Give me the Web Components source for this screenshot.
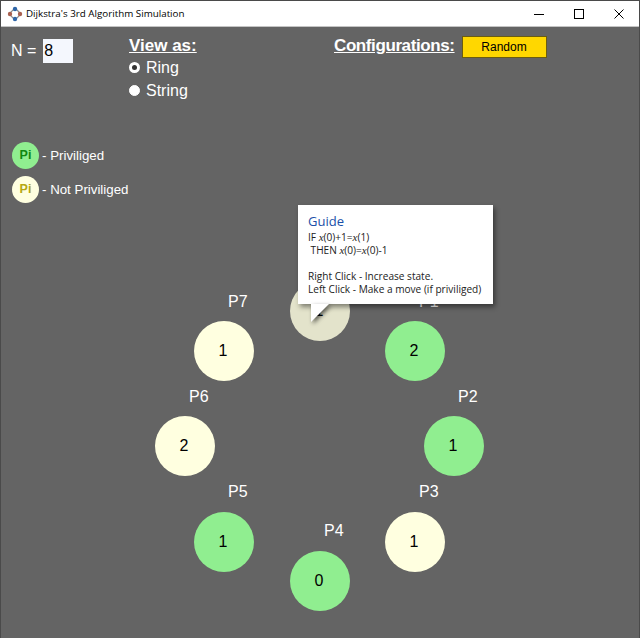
<!DOCTYPE html>
<html>
<head>
<meta charset="utf-8">
<title>Dijkstra's 3rd Algorithm Simulation</title>
<style>
    html, body { margin: 0; padding: 0; height: 100%; background: #646464; }
    body { font-family: "Liberation Sans", Arial, sans-serif; overflow: hidden; }
</style>
</head>
<body>
<app-window>
    <title-bar slot="bar">Dijkstra's 3rd Algorithm Simulation</title-bar>
    <control-panel slot="controls"></control-panel>
    <state-legend slot="legend"></state-legend>
    <ring-canvas slot="canvas"></ring-canvas>
</app-window>

<script>
class AppWindow extends HTMLElement {
    constructor() {
        super();
        this.attachShadow({ mode: "open" }).innerHTML = `
        <style>
            :host {
                display: flex;
                flex-direction: column;
                position: relative;
                width: 640px;
                height: 638px;
                box-sizing: border-box;
                border: 1px solid #4a4a4a;
                border-bottom: 0;
                background: #646464;
                overflow: hidden;
            }
            .main { position: relative; flex: 1; }
        </style>
        <slot name="bar"></slot>
        <div class="main">
            <slot name="controls"></slot>
            <slot name="legend"></slot>
            <slot name="canvas"></slot>
        </div>`;
    }
}

class TitleBar extends HTMLElement {
    constructor() {
        super();
        this.attachShadow({ mode: "open" }).innerHTML = `
        <style>
            :host {
                display: flex;
                align-items: center;
                height: 25px;
                flex: none;
                background: #fff;
                border-bottom: 1px solid #c4c4c4;
                color: #000;
                font: 9.8px "Open Sans", "Noto Sans", sans-serif;
            }
            .logo { width: 16px; height: 16px; margin: 0 3px 0 6px; flex: none; }
            .name { flex: 1; white-space: nowrap; }
            .btn { width: 40px; height: 25px; display: flex; align-items: center; justify-content: center; }
            svg { display: block; }
        </style>
        <svg class="logo" viewBox="0 0 16 16">
            <path d="M8 2 14 8 8 14 2 8Z" fill="none" stroke="#8a8a8a" stroke-width="1.2"/>
            <circle cx="8" cy="3" r="2.2" fill="#2f66a8"/>
            <circle cx="8" cy="13" r="2.2" fill="#2f66a8"/>
            <circle cx="3" cy="8" r="2.2" fill="#a8604f"/>
            <circle cx="13" cy="8" r="2.2" fill="#a8604f"/>
        </svg>
        <span class="name"><slot></slot></span>
        <span class="btn"><svg width="10" height="10" viewBox="0 0 10 10"><path d="M0 5.5H10" stroke="#000"/></svg></span>
        <span class="btn"><svg width="10" height="10" viewBox="0 0 10 10"><rect x=".5" y=".5" width="9" height="9" fill="none" stroke="#000"/></svg></span>
        <span class="btn"><svg width="10" height="10" viewBox="0 0 10 10"><path d="M.5 .5 9.5 9.5M9.5 .5 .5 9.5" stroke="#000" stroke-width="1"/></svg></span>`;
    }
}

class RadioOption extends HTMLElement {
    constructor() {
        super();
        const checked = this.hasAttribute("checked");
        this.attachShadow({ mode: "open" }).innerHTML = `
        <style>
            :host {
                display: flex;
                align-items: center;
                height: 22.5px;
                color: #fff;
                font: 16px "Liberation Sans", Arial, sans-serif;
            }
            .dot {
                width: 11px;
                height: 11px;
                box-sizing: border-box;
                margin: -1px 6px 0 0;
                border-radius: 50%;
                background: #fff;
                border: ${checked ? "3px solid #fff" : "1px solid #fff"};
            }
            .dot::after {
                content: "";
                display: ${checked ? "block" : "none"};
                width: 5px;
                height: 5px;
                border-radius: 50%;
                background: #333;
            }
        </style>
        <span class="dot"></span><slot></slot>`;
    }
}

class ControlPanel extends HTMLElement {
    constructor() {
        super();
        this.attachShadow({ mode: "open" }).innerHTML = `
        <style>
            :host {
                display: flex;
                align-items: flex-start;
                padding: 9px 0 0 10px;
                height: 71px;
                box-sizing: content-box;
                color: #fff;
                font: 16px "Liberation Sans", Arial, sans-serif;
            }
            .n { display: flex; align-items: center; width: 118px; height: 24px; margin-top: 3px; }
            .n input {
                width: 30px;
                height: 24px;
                box-sizing: border-box;
                margin-left: 7px;
                padding: 0 0 0 1px;
                border: 0;
                background: #f4f7fd;
                color: #000;
                font: 16px "Liberation Sans", Arial, sans-serif;
            }
            .view { width: 205px; }
            .options { margin-top: 1px; }
            h2 {
                margin: 0;
                font-size: 17px;
                line-height: 20px;
                font-weight: bold;
                text-decoration: underline;
            }
            .conf { display: flex; align-items: flex-start; gap: 7px; }
            .conf h2 { letter-spacing: -.4px; }
            button {
                width: 85px;
                height: 22px;
                padding: 0;
                background: #ffd700;
                border: 1px solid #6b5d10;
                color: #000;
                font: 12px "Liberation Sans", Arial, sans-serif;
            }
        </style>
        <div class="n">N = <input value="8"></div>
        <div class="view">
            <h2>View as:</h2>
            <div class="options">
                <radio-option checked>Ring</radio-option>
                <radio-option>String</radio-option>
            </div>
        </div>
        <div class="conf">
            <h2>Configurations:</h2>
            <button>Random</button>
        </div>`;
    }
}

class LegendRow extends HTMLElement {
    constructor() {
        super();
        const on = this.hasAttribute("on");
        this.attachShadow({ mode: "open" }).innerHTML = `
        <style>
            :host {
                display: flex;
                align-items: center;
                gap: 3px;
                height: 28px;
                color: #fff;
                font: 13.3px "Liberation Sans", Arial, sans-serif;
            }
            .pi {
                width: 27px;
                height: 27px;
                border-radius: 50%;
                display: flex;
                align-items: center;
                justify-content: center;
                background: ${on ? "#90ee90" : "#ffffe0"};
                color: ${on ? "#118811" : "#b5a812"};
                font-size: 12.5px;
                font-weight: bold;
            }
        </style>
        <span class="pi">Pi</span><span>- <slot></slot></span>`;
    }
}

class StateLegend extends HTMLElement {
    constructor() {
        super();
        this.attachShadow({ mode: "open" }).innerHTML = `
        <style>
            :host {
                display: flex;
                flex-direction: column;
                gap: 6px;
                margin-top: 34px;
                padding-left: 11px;
                width: 200px;
            }
        </style>
        <legend-row on>Priviliged</legend-row>
        <legend-row>Not Priviliged</legend-row>`;
    }
}

class RingNode extends HTMLElement {
    constructor() {
        super();
        const on = this.hasAttribute("on");
        const cx = +this.getAttribute("cx"), cy = +this.getAttribute("cy");
        const dim = this.hasAttribute("hover");
        this.attachShadow({ mode: "open" }).innerHTML = `
        <style>
            :host { display: block; position: absolute; left: ${cx - 30}px; top: ${cy - 30}px; width: 60px; height: 60px; }
            .c {
                width: 60px;
                height: 60px;
                box-sizing: border-box;
                padding-right: 2px;
                border-radius: 50%;
                display: flex;
                align-items: center;
                justify-content: center;
                background: ${dim ? "#e3e3cb" : on ? "#90ee90" : "#ffffe0"};
                color: #000;
                font: 16px "Liberation Sans", Arial, sans-serif;
            }
            .p {
                position: absolute;
                left: 34px;
                top: ${this.getAttribute("ly")}px;
                color: #fff;
                font: 16px/18px "Liberation Sans", Arial, sans-serif;
            }
        </style>
        <span class="p">${this.getAttribute("name") || ""}</span>
        <div class="c"><slot></slot></div>`;
    }
}

class GuideTip extends HTMLElement {
    constructor() {
        super();
        this.attachShadow({ mode: "open" }).innerHTML = `
        <style>
            :host {
                display: block;
                position: absolute;
                left: 297px;
                top: 178px;
                width: 195px;
                height: 99px;
                box-sizing: border-box;
                padding: 8px 9px 0 10px;
                background: #fff;
                box-shadow: 2px 3px 5px rgba(0,0,0,.45);
                color: #222;
                font: 10.1px/13px "Open Sans", "Noto Sans", sans-serif;
            }
            h3 { margin: 0 0 2px; font-size: 13px; line-height: 16px; font-weight: normal; color: #1a4fa8; }
            .lines { white-space: pre; }
            i { font-family: "Liberation Serif", serif; font-size: 11px; }
            .tail {
                position: absolute;
                left: 13px;
                top: 99px;
                width: 0;
                height: 0;
                border-right: 18px solid transparent;
                border-top: 18px solid #fff;
                filter: drop-shadow(2px 2px 2px rgba(0,0,0,.6));
            }
        </style>
        <h3>Guide</h3>
        <div class="lines">IF <i>x</i>(0)+1=<i>x</i>(1)
 THEN <i>x</i>(0)=<i>x</i>(0)-1

Right Click - Increase state.
Left Click - Make a move (if priviliged)</div>
        <span class="tail"></span>`;
    }
}

class RingCanvas extends HTMLElement {
    constructor() {
        super();
        // centres are in main area coords, it starts at (1, 26)
        const nodes = [
            { v: 1, cx: 319, cy: 284, ly: -28, hover: true }, // P0, its label sits under the tooltip
            { name: "P1", v: 2, cx: 414, cy: 324, ly: -28, on: true },
            { name: "P2", v: 1, cx: 453, cy: 419, ly: -28, on: true },
            { name: "P3", v: 1, cx: 414, cy: 515, ly: -29 },
            { name: "P4", v: 0, cx: 319, cy: 554, ly: -29, on: true },
            { name: "P5", v: 1, cx: 223, cy: 515, ly: -29, on: true },
            { name: "P6", v: 2, cx: 184, cy: 419, ly: -28 },
            { name: "P7", v: 1, cx: 223, cy: 324, ly: -28 }
        ];
        const html = nodes.map(n => `<ring-node ${n.name ? `name="${n.name}"` : ""} cx="${n.cx}" cy="${n.cy}" ly="${n.ly}"${n.on ? " on" : ""}${n.hover ? " hover" : ""}>${n.v}</ring-node>`).join("");
        this.attachShadow({ mode: "open" }).innerHTML = `
        <style>
            :host { display: block; position: absolute; inset: 0; pointer-events: none; }
        </style>
        ${html}
        <guide-tip></guide-tip>`;
    }
}

customElements.define("app-window", AppWindow);
customElements.define("title-bar", TitleBar);
customElements.define("radio-option", RadioOption);
customElements.define("control-panel", ControlPanel);
customElements.define("legend-row", LegendRow);
customElements.define("state-legend", StateLegend);
customElements.define("ring-node", RingNode);
customElements.define("guide-tip", GuideTip);
customElements.define("ring-canvas", RingCanvas);
</script>
</body>
</html>
